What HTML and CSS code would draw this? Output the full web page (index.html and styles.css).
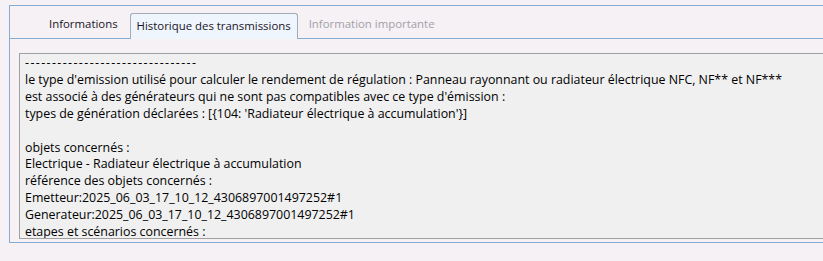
FILE: index.html
```html
<!DOCTYPE html>
<html lang="fr">
<head>
  <meta charset="UTF-8">
  <title>Historique des transmissions</title>
  <link rel="stylesheet" href="styles.css">
</head>
<body>

<div class="frame">
  <div class="tabs">
    <div class="tab first">Informations</div>
    <div class="tab active">Historique des transmissions</div>
    <div class="tab disabled">Information importante</div>
  </div>

  <div class="panel">
    <div class="textbox">
      <div class="line sep">--------------------------------</div>
      <div class="line">le type d'emission utilisé pour calculer le rendement de régulation : Panneau rayonnant ou radiateur électrique NFC, NF** et NF***</div>
      <div class="line">est associé à des générateurs qui ne sont pas compatibles avec ce type d'émission :</div>
      <div class="line">types de génération déclarées : [{104: 'Radiateur électrique à accumulation'}]</div>
      <div class="line">&nbsp;</div>
      <div class="line">objets concernés :</div>
      <div class="line">Electrique - Radiateur électrique à accumulation</div>
      <div class="line">référence des objets concernés :</div>
      <div class="line">Emetteur:2025_06_03_17_10_12_4306897001497252#1</div>
      <div class="line">Generateur:2025_06_03_17_10_12_4306897001497252#1</div>
      <div class="line">etapes et scénarios concernés :</div>
      <div class="line">&nbsp;</div>
    </div>
  </div>
</div>

</body>
</html>
```

FILE: styles.css
```css
body {
  margin: 0;
  background-color: #f5f1f5;
  font-family: "Open Sans", "Liberation Sans", sans-serif;
  font-size: 11.4px;
  color: #000;
  overflow: hidden;
}

/* cadre bleu autour des onglets */
.frame {
  margin: 5px -20px 0 9px;
  border: 1px solid #86acd3;
  border-right: none;
}

.tabs {
  display: flex;
  align-items: flex-end;
  height: 32px;
  padding-left: 33px;
}

.tab {
  height: 23px;
  line-height: 23px;
  padding: 0 6px 3px 6px;
  white-space: nowrap;
  color: #1b1426;
}

.tab.first {
  margin-right: 6px;
}

.tab.active {
  height: 22px;
  padding-bottom: 3px;
  margin-bottom: -1px;
  border: 1px solid #a3acb8;
  border-bottom: none;
  border-radius: 3px 3px 0 0;
  background-color: #eef5fc;
}

.tab.disabled {
  margin-left: 5px;
  color: #a4a0a8;
}

.panel {
  border-top: 1px solid #86acd3;
  padding: 14px 0 3px 9px;
}

/* zone de texte en lecture seule */
.textbox {
  height: 183px;
  border: 1px solid #a0a0a0;
  background-color: #f0f0f0;
  padding: 1px 0 0 5px;
  overflow: hidden;
}

.textbox .line {
  font-size: 12.4px;
  line-height: 16.9px;
  white-space: nowrap;
}

.textbox .sep {
  letter-spacing: 1.4px;
}
```
